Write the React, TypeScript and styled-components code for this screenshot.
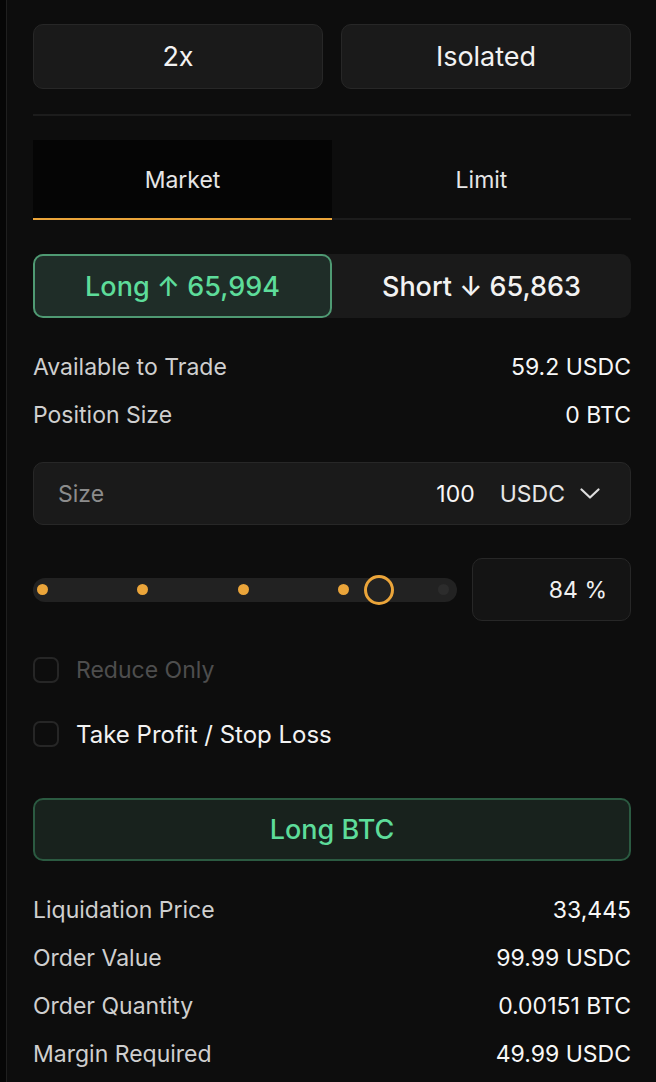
import React from 'react';
import styled, { createGlobalStyle } from 'styled-components';

const GlobalStyle = createGlobalStyle`
  html, body {
    margin: 0;
    padding: 0;
    background: #0d0d0d;
  }
  body {
    font-family: Inter, "Noto Sans", "Liberation Sans", sans-serif;
    color: #f2f2f2;
    -webkit-font-smoothing: antialiased;
  }
`;

const Root = styled.div`
  display: flex;
  min-height: 1082px;
  background: #0d0d0d;
`;

const Strip = styled.div`
  width: 6px;
  flex-shrink: 0;
  background: #060606;
  border-right: 1px solid #1f1f1f;
`;

const Panel = styled.div`
  flex: 1;
  padding: 24px 25px 0 26px;
  display: flex;
  flex-direction: column;
`;

const TopRow = styled.div`
  display: grid;
  grid-template-columns: 1fr 1fr;
  gap: 18px;
`;

const TopButton = styled.button`
  height: 65px;
  background: #1a1a1a;
  border: 1px solid #272727;
  border-radius: 10px;
  color: #f2f2f2;
  font-family: inherit;
  font-size: 27px;
  font-weight: 400;
`;

const Divider = styled.div`
  height: 2px;
  background: #1c1c1c;
  margin-top: 25px;
`;

const Tabs = styled.div`
  display: grid;
  grid-template-columns: 1fr 1fr;
  margin-top: 24px;
  border-bottom: 2px solid #1c1c1c;
`;

const Tab = styled.div<{ $active?: boolean }>`
  height: 80px;
  display: flex;
  align-items: center;
  justify-content: center;
  font-size: 23px;
  color: #e6e6e6;
  background: ${p => (p.$active ? '#050505' : 'transparent')};
  box-shadow: ${p => (p.$active ? 'inset 0 -2px 0 #eba53a' : 'none')};
  margin-bottom: -2px;
`;

const SideToggle = styled.div`
  display: grid;
  grid-template-columns: 1fr 1fr;
  margin-top: 34px;
  height: 64px;
  background: #1a1a1a;
  border-radius: 10px;
`;

const SideButton = styled.div<{ $active?: boolean }>`
  display: flex;
  align-items: center;
  justify-content: center;
  font-size: 27px;
  font-weight: 500;
  border-radius: 10px;
  color: ${p => (p.$active ? '#5ddc9a' : '#f2f2f2')};
  background: ${p => (p.$active ? '#1f2d28' : 'transparent')};
  border: 2px solid ${p => (p.$active ? '#4f9a73' : 'transparent')};
`;

const InfoList = styled.div<{ $top: number }>`
  margin-top: ${p => p.$top}px;
  display: flex;
  flex-direction: column;
`;

const InfoRow = styled.div`
  height: 48px;
  display: flex;
  align-items: center;
  justify-content: space-between;
  font-size: 23px;
`;

const Label = styled.span`
  color: #cfcfcf;
`;

const Value = styled.span`
  color: #f7f7f7;
`;

const SizeBox = styled.div`
  margin-top: 23px;
  height: 63px;
  box-sizing: border-box;
  background: #1a1a1a;
  border: 1px solid #272727;
  border-radius: 10px;
  display: flex;
  align-items: center;
  padding: 0 30px 0 24px;
  font-size: 23px;
`;

const Placeholder = styled.span`
  color: #8c8c8c;
  flex: 1;
`;

const SizeAmount = styled.span`
  color: #f7f7f7;
  margin-right: 25px;
`;

const Unit = styled.span`
  display: flex;
  align-items: center;
  gap: 15px;
  color: #e6e6e6;
`;

const SliderRow = styled.div`
  margin-top: 33px;
  display: flex;
  align-items: center;
  gap: 15px;
`;

const Track = styled.div`
  position: relative;
  flex: 1;
  height: 24px;
  background: #222222;
  border-radius: 12px;
  display: flex;
  align-items: center;
  justify-content: space-between;
  padding: 0 8px 0 4px;
`;

const Dot = styled.span<{ $on?: boolean }>`
  width: 11px;
  height: 11px;
  border-radius: 50%;
  background: ${p => (p.$on ? '#eba53a' : '#2c2c2c')};
`;

const Thumb = styled.span`
  position: absolute;
  top: 50%;
  width: 30px;
  height: 30px;
  box-sizing: border-box;
  border: 3px solid #eba53a;
  border-radius: 50%;
  transform: translate(-50%, -50%);
  background: transparent;
`;

const PercentBox = styled.div`
  width: 159px;
  height: 63px;
  box-sizing: border-box;
  background: #141414;
  border: 1px solid #272727;
  border-radius: 10px;
  display: flex;
  align-items: center;
  justify-content: flex-end;
  padding-right: 23px;
  font-size: 23px;
  color: #f0f0f0;
`;

const CheckList = styled.div`
  margin-top: 17px;
  display: flex;
  flex-direction: column;
`;

const CheckRow = styled.label<{ $dim?: boolean }>`
  height: 64px;
  display: flex;
  align-items: center;
  gap: 17px;
  font-size: ${p => (p.$dim ? 23 : 24)}px;
  color: ${p => (p.$dim ? '#4e4e4e' : '#f2f2f2')};
`;

const Box = styled.span`
  width: 26px;
  height: 26px;
  box-sizing: border-box;
  border: 2px solid #262626;
  border-radius: 7px;
`;

const SubmitButton = styled.button`
  margin-top: 32px;
  height: 63px;
  background: #18221d;
  border: 2px solid #2b5a41;
  border-radius: 10px;
  color: #5ddc9a;
  font-family: inherit;
  font-size: 27px;
  font-weight: 500;
`;

const Chevron = () => (
  <svg width="20" height="11" viewBox="0 0 20 11" fill="none">
    <polyline
      points="1.5,1.5 10,9.5 18.5,1.5"
      stroke="#dddddd"
      strokeWidth="2.2"
      strokeLinecap="round"
      strokeLinejoin="round"
    />
  </svg>
);

const levels = [0, 25, 50, 75, 100];
const percent = 84;

export default function App() {
  return (
    <>
      <GlobalStyle />
      <Root>
        <Strip />
        <Panel>
          <TopRow>
            <TopButton>2x</TopButton>
            <TopButton>Isolated</TopButton>
          </TopRow>
          <Divider />
          <Tabs>
            <Tab $active>Market</Tab>
            <Tab>Limit</Tab>
          </Tabs>
          <SideToggle>
            <SideButton $active>Long ↑ 65,994</SideButton>
            <SideButton>Short ↓ 65,863</SideButton>
          </SideToggle>
          <InfoList $top={25}>
            <InfoRow>
              <Label>Available to Trade</Label>
              <Value>59.2 USDC</Value>
            </InfoRow>
            <InfoRow>
              <Label>Position Size</Label>
              <Value>0 BTC</Value>
            </InfoRow>
          </InfoList>
          <SizeBox>
            <Placeholder>Size</Placeholder>
            <SizeAmount>100</SizeAmount>
            <Unit>
              USDC
              <Chevron />
            </Unit>
          </SizeBox>
          <SliderRow>
            <Track>
              {levels.map(l => (
                <Dot key={l} $on={l <= percent} />
              ))}
              <Thumb style={{ left: `calc(9.5px + ${percent / 100} * (100% - 23px))` }} />
            </Track>
            <PercentBox>{percent} %</PercentBox>
          </SliderRow>
          <CheckList>
            <CheckRow $dim>
              <Box />
              Reduce Only
            </CheckRow>
            <CheckRow>
              <Box />
              Take Profit / Stop Loss
            </CheckRow>
          </CheckList>
          <SubmitButton>Long BTC</SubmitButton>
          <InfoList $top={25}>
            <InfoRow>
              <Label>Liquidation Price</Label>
              <Value>33,445</Value>
            </InfoRow>
            <InfoRow>
              <Label>Order Value</Label>
              <Value>99.99 USDC</Value>
            </InfoRow>
            <InfoRow>
              <Label>Order Quantity</Label>
              <Value>0.00151 BTC</Value>
            </InfoRow>
            <InfoRow>
              <Label>Margin Required</Label>
              <Value>49.99 USDC</Value>
            </InfoRow>
          </InfoList>
        </Panel>
      </Root>
    </>
  );
}
